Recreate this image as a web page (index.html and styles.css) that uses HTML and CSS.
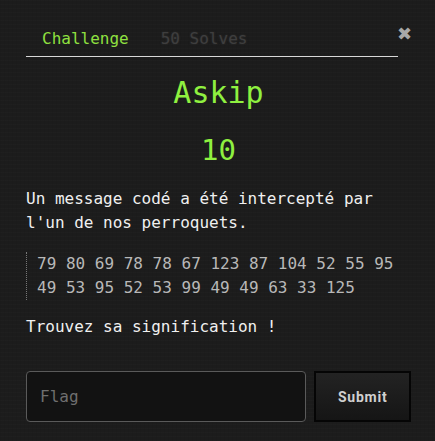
FILE: index.html
```html
<!DOCTYPE html>
<html>
<head>
<meta charset="utf-8">
<link rel="stylesheet" href="styles.css">
</head>
<body>
<div class="modal">
  <button class="close" aria-label="Close">&#x2716;</button>
  <nav class="tabs">
    <span class="tab active">Challenge</span>
    <span class="tab muted">50 Solves</span>
  </nav>
  <h2 class="title">Askip</h2>
  <h3 class="points">10</h3>
  <p class="desc">Un message codé a été intercepté par l'un de nos perroquets.</p>
  <div class="code">79 80 69 78 78 67 123 87 104 52 55 95 49 53 95 52 53 99 49 49 63 33 125</div>
  <p class="desc find">Trouvez sa signification !</p>
  <form class="submit-row">
    <input class="flag" type="text" placeholder="Flag">
    <button class="submit" type="button">Submit</button>
  </form>
</div>
</body>
</html>
```
FILE: styles.css
```css
html, body {
  margin: 0;
  padding: 0;
}
body {
  background-color: #1c1c1c;
  background-image:
    repeating-linear-gradient(0deg, rgba(255,255,255,0.012) 0 1px, transparent 1px 4px),
    repeating-linear-gradient(90deg, rgba(0,0,0,0.05) 0 1px, transparent 1px 4px);
  font-family: "DejaVu Sans Mono", monospace;
  color: #eee;
  width: 435px;
  height: 441px;
  overflow: hidden;
}
.modal {
  position: relative;
  padding: 22px 24px 0 26px;
}
.close {
  position: absolute;
  top: 23px;
  right: 23px;
  background: none;
  border: 0;
  padding: 0;
  color: #a8a8a8;
  font-size: 18px;
  line-height: 22px;
  font-family: "DejaVu Sans", sans-serif;
  cursor: pointer;
}
.tabs {
  display: flex;
  width: 372px;
  border-bottom: 1px solid #d8d8d8;
  height: 35px;
  box-sizing: border-box;
}
.tab {
  padding: 0 16px;
  font-size: 16px;
  line-height: 34px;
}
.active {
  color: #8fe040;
}
.muted {
  color: #3e3e3e;
  text-shadow: 0 0 2px rgba(70,70,70,0.5);
}
.title {
  margin: 16px 0 0;
  text-align: center;
  font-weight: normal;
  font-size: 30px;
  line-height: 40px;
  color: #8ff040;
}
.points {
  margin: 17px 0 0;
  text-align: center;
  font-weight: normal;
  font-size: 29px;
  line-height: 40px;
  color: #8ff040;
}
.desc {
  margin: 17px 0 0;
  font-size: 16px;
  line-height: 24px;
  color: #f0f0f0;
  width: 375px;
}
.code {
  margin-top: 17px;
  border-left: 1px dotted #777;
  padding-left: 10px;
  font-size: 16px;
  line-height: 24px;
  color: #b8b8b8;
  width: 360px;
}
.find {
  margin-top: 15px;
}
.submit-row {
  display: flex;
  gap: 8px;
  margin-top: 32px;
}
.flag {
  box-sizing: border-box;
  width: 282px;
  height: 51px;
  background: #121212;
  border: 1px solid #5a5a5a;
  border-radius: 4px;
  padding: 0 13px;
  font-family: "DejaVu Sans Mono", monospace;
  font-size: 16px;
  color: #ddd;
  outline: none;
}
.flag::placeholder {
  color: #6f6f6f;
}
.submit {
  box-sizing: border-box;
  width: 97px;
  height: 51px;
  background: linear-gradient(#232323, #151515);
  border: 2px solid #050505;
  border-radius: 0;
  color: #d0d0d0;
  font-family: Roboto, "Liberation Sans", sans-serif;
  font-weight: bold;
  font-size: 14px;
  letter-spacing: 0.8px;
}
```
